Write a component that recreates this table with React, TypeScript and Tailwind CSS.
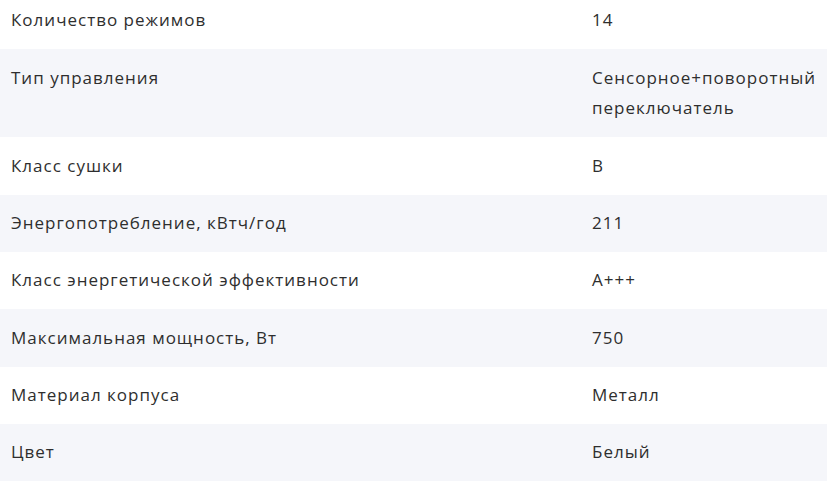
import React from "react";

const rows: [string, string][] = [
  ["Количество режимов", "14"],
  ["Тип управления", "Сенсорное+поворотный переключатель"],
  ["Класс сушки", "B"],
  ["Энергопотребление, кВтч/год", "211"],
  ["Класс энергетической эффективности", "A+++"],
  ["Максимальная мощность, Вт", "750"],
  ["Материал корпуса", "Металл"],
  ["Цвет", "Белый"],
];

export default function App() {
  return (
    <div
      className="w-[827px] h-[482px] overflow-hidden bg-white text-[#2e2e2e] text-[17px] leading-[30.67px] tracking-[1px]"
      style={{ fontFamily: "'Open Sans', 'Noto Sans', sans-serif" }}
    >
      <div className="-mt-[8px] flex flex-col">
        {rows.map(([k, v], i) => (
          <div
            key={k}
            className={`grid grid-cols-[581px_1fr] ${i % 2 === 1 ? "bg-[#f5f6fa]" : "bg-white"}`}
          >
            <div className="px-[11px] py-[13.33px]">{k}</div>
            <div className="pl-[11px] pr-[4px] py-[13.33px]">{v}</div>
          </div>
        ))}
      </div>
    </div>
  );
}
